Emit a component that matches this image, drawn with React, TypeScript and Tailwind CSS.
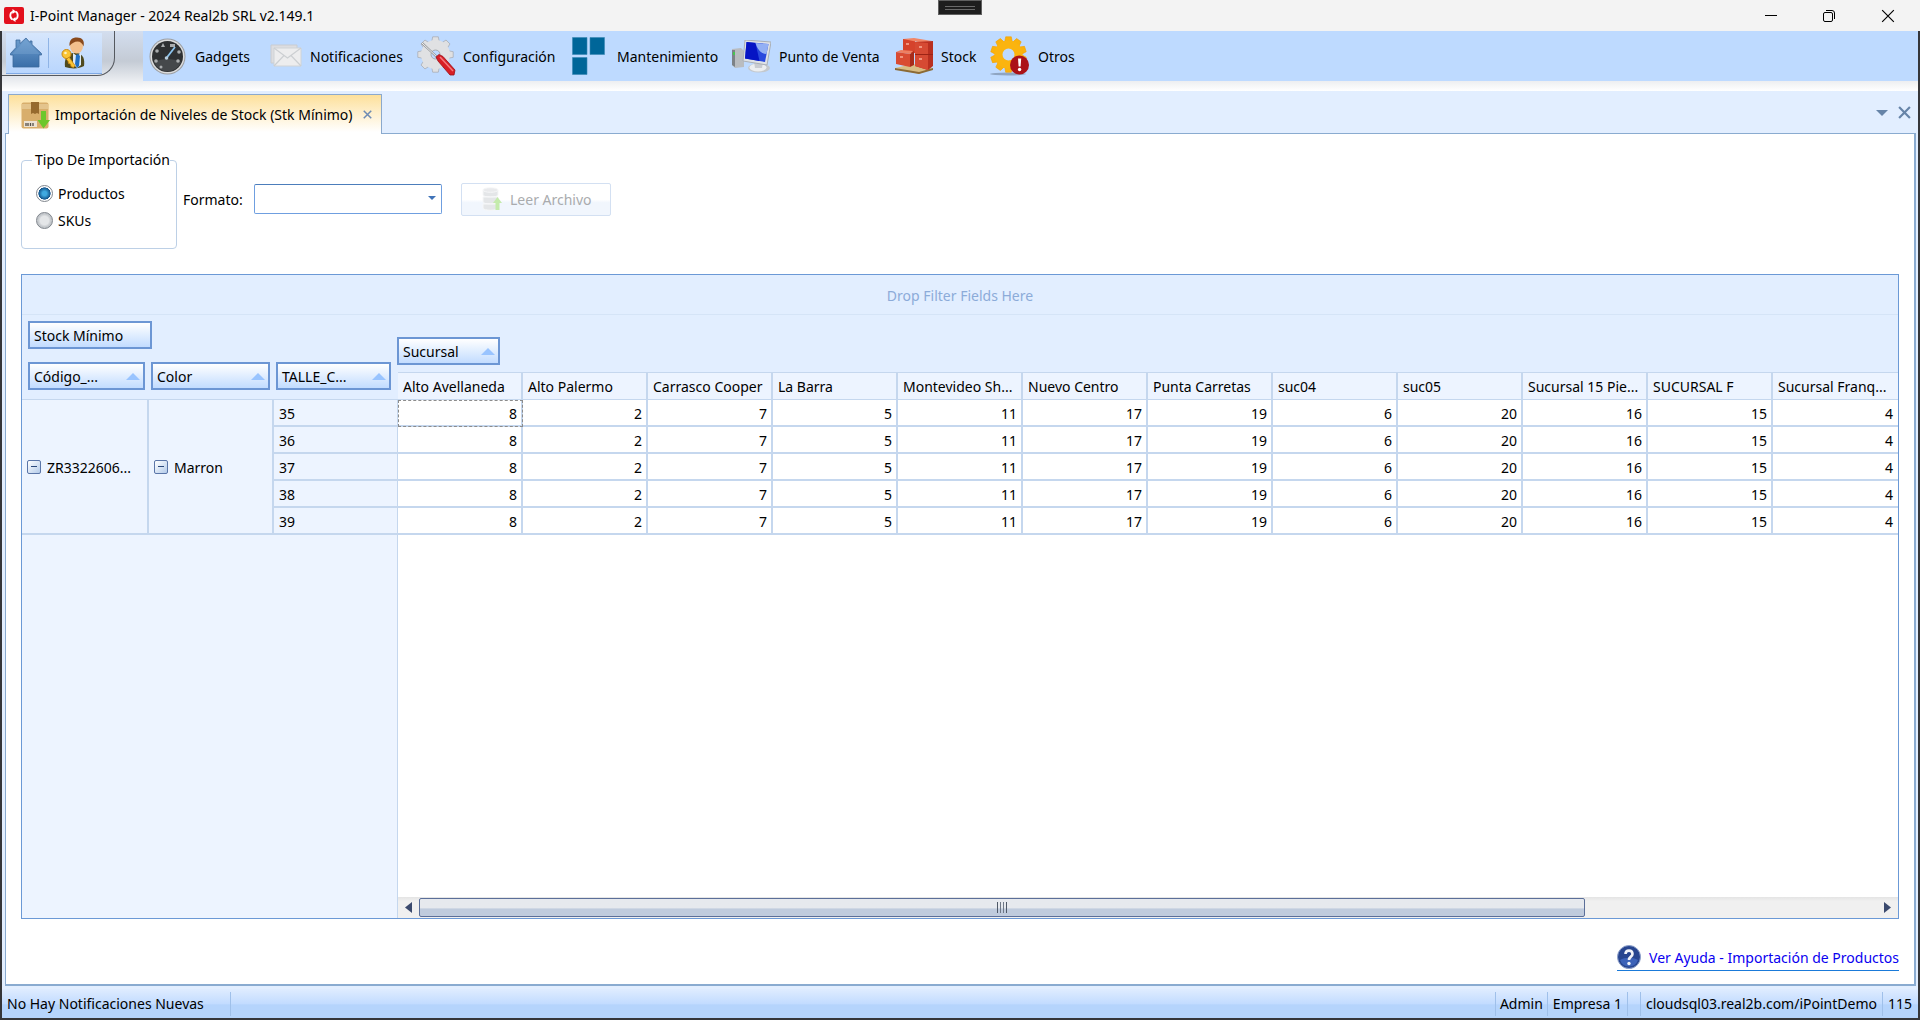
import { ReactNode } from "react"

// ####
// #### Data
// ####

const branches = [
  { name: "Alto Avellaneda", min: 8 },
  { name: "Alto Palermo", min: 2 },
  { name: "Carrasco Cooper", min: 7 },
  { name: "La Barra", min: 5 },
  { name: "Montevideo Sh...", min: 11 },
  { name: "Nuevo Centro", min: 17 },
  { name: "Punta Carretas", min: 19 },
  { name: "suc04", min: 6 },
  { name: "suc05", min: 20 },
  { name: "Sucursal 15 Pie...", min: 16 },
  { name: "SUCURSAL F", min: 15 },
  { name: "Sucursal Franq...", min: 4 },
]

const sizes = [35, 36, 37, 38, 39]

// ####
// #### Icons
// ####

const LogoIcon = () => (
  <svg width="20" height="17" viewBox="0 0 20 17" aria-hidden="true">
    <rect width="20" height="17" rx="2" fill="#e3101c" />
    <path
      d="M8.500 12.500C5.500 11 5.500 5.500 9 4.500M11.500 4.500c3 1.500 3 7-.5 8"
      fill="none"
      stroke="#fff"
      strokeWidth="1.800"
    />
    <path d="M8.500 2v5l3.500-2.500zM11.500 10v5L8 12.500z" fill="#fff" />
  </svg>
)

const HouseIcon = () => (
  <svg width="32" height="32" viewBox="0 0 32 32" aria-hidden="true">
    <defs>
      <linearGradient id="house" x1="0" y1="0" x2="0" y2="1">
        <stop offset="0" stopColor="#6f9fd0" />
        <stop offset="1" stopColor="#3a6ea8" />
      </linearGradient>
    </defs>
    <path
      d="M16 1 10 6.500V3H6v7.500L.5 16.500v1.500H3v12h26V18h2.500v-1.500L22 7.500V4h-2v1.500z"
      fill="url(#house)"
      stroke="#3d6a9c"
      strokeWidth=".8"
    />
    <path d="M16 2.500 2 17h28z" fill="#82acd8" opacity=".35" />
  </svg>
)

const UserKeyIcon = () => (
  <svg width="24" height="32" viewBox="0 0 24 32" aria-hidden="true">
    <path d="M4 30c-1-8 2-13 8-14h4c6 1 8 6 7 13-5 3-13 3-19 1z" fill="#4f4a1e" />
    <path d="m12 16 4 3 4-3v12l-4 3-4-4z" fill="#dceaf8" />
    <path d="m15 18 2-1 2 2-1 10-2 2-2-4z" fill="#1f6fc4" />
    <ellipse cx="15.500" cy="9" rx="6.500" ry="7.500" fill="#f3c08c" />
    <path
      d="M8.500 9C8 3 11 .5 16 .5s8 3 6.500 9c-1-3-3-5-6-5S11 6 8.500 9z"
      fill="#8a4a1c"
    />
    <circle cx="5.500" cy="17" r="4.500" fill="#fbc534" stroke="#c98612" />
    <circle cx="4.500" cy="16" r="1.300" fill="#fff3c4" />
    <path
      d="m8 20 6 8.500-1.500 2-2.500-1-.5-2.500-2-.5-.5-2.500-1.500-1.500z"
      fill="#fbc534"
      stroke="#c98612"
      strokeWidth=".8"
    />
  </svg>
)

const GaugeIcon = () => (
  <svg width="37" height="37" viewBox="0 0 37 37" aria-hidden="true">
    <circle cx="18.500" cy="18.500" r="18" fill="#9b9ea2" />
    <circle cx="18.500" cy="18.500" r="17" fill="#dcddde" />
    <circle cx="18.500" cy="18.500" r="15.500" fill="#2e3032" />
    <path d="M5 24a14.500 14.500 0 0 0 27 0c-8-4-19-4-27 0z" fill="#45484b" />
    <path d="m12 9 2-4 2 4zM21 6h5v3h-5z" fill="#a9acae" />
    <g fill="#a9acae">
      <circle cx="8" cy="13" r="1.800" />
      <circle cx="7" cy="23" r="1.800" />
      <circle cx="12" cy="29" r="1.500" />
      <circle cx="30" cy="14" r="1.800" />
      <circle cx="29" cy="23" r="1.800" />
    </g>
    <path d="m17.500 20 8.500-11" stroke="#8cc4ee" strokeWidth="1.800" />
    <circle cx="17.500" cy="20" r="1.800" fill="#b8cddd" />
  </svg>
)

const MailIcon = () => (
  <svg width="32" height="24" viewBox="0 0 32 24" aria-hidden="true">
    <path d="M1 1h26v18H1z" fill="#dcdde0" stroke="#c9ccd0" />
    <path d="M4 4h27v18H4z" fill="#ededee" stroke="#d0d3d6" />
    <path
      d="m4 4 13.500 10L31 4M4 22l10-10.500M31 22 21 11.500"
      fill="none"
      stroke="#cccfd2"
      strokeWidth="1.200"
    />
  </svg>
)

const GearTeeth = ({
  angles,
  fill,
  stroke,
}: {
  angles: number[]
  fill: string
  stroke: string
}) => (
  <g fill={fill} stroke={stroke} strokeWidth=".6">
    {angles.map(angle => (
      <path
        key={angle}
        d="M14.500 7 15.700.8h5.600L22.500 7z"
        transform={`rotate(${angle} 18.500 18.500)`}
      />
    ))}
  </g>
)

const GearToolIcon = () => (
  <svg width="40" height="40" viewBox="0 0 40 40" aria-hidden="true">
    <GearTeeth
      angles={[0, 45, 90, 135, 180, 225, 270, 315]}
      fill="#dfe0e2"
      stroke="#9da0a4"
    />
    <circle
      cx="18.500"
      cy="18.500"
      r="9.500"
      fill="none"
      stroke="#e0e1e3"
      strokeWidth="10"
    />
    <circle cx="18.500" cy="18.500" r="4.500" fill="#bedaff" stroke="#a8abae" />
    <path d="m5 7 16 15" stroke="#8d9195" strokeWidth="2.200" />
    <path d="m5 7 16 15" stroke="#f4f4f4" strokeWidth="1" />
    <path
      d="m19 21 3-2.500 4 2L38 34l-1 5h-4L21 25z"
      fill="#d81e26"
      stroke="#9c1016"
      strokeWidth=".8"
    />
    <path d="m23 21 13 14" stroke="#f47a7e" strokeWidth="1.500" />
  </svg>
)

const TilesIcon = () => (
  <svg width="33" height="38" viewBox="0 0 33 38" aria-hidden="true">
    <g fill="#006699" stroke="#3a86b4" strokeWidth=".6">
      <path d="M.5.5h14.500v17H.5zM18 .5h14.500v17H18zM.5 20.500h14.500v17H.5z" />
    </g>
  </svg>
)

const ComputerIcon = () => (
  <svg width="39" height="33" viewBox="0 0 39 33" aria-hidden="true">
    <path d="m0 9 9-1 3 3v16l-9 1-3-3z" fill="#b9bcc0" />
    <path d="M0 10h3v17l-3-2z" fill="#7d8287" />
    <path d="M1 12h2v3H1z" fill="#46c452" />
    <ellipse cx="27" cy="28" rx="11" ry="4.500" fill="#c4c8cd" />
    <ellipse cx="26" cy="27.500" rx="8.500" ry="4" fill="#eceef0" />
    <path d="M22 22h9l-1 6h-7z" fill="#c9ccd1" />
    <path d="m13 0 26 2-4 23-24-4z" fill="#dfe2e6" stroke="#a9afb6" />
    <path d="m14.500 2 22 2-3.500 18-20-3.500z" fill="#2a49dd" />
    <path d="m14.500 2 9 1 4 18-14.500-2.500z" fill="#0614c4" />
    <path d="m23.500 3 13 1-2 10c-5 0-9-4-11-11z" fill="#93b0f4" />
  </svg>
)

const BoxesIcon = () => (
  <svg width="38" height="36" viewBox="0 0 38 36" aria-hidden="true">
    <path d="m0 30 18-4 20 4-14 6z" fill="#d8bd84" />
    <path d="m0 30 24 4v2L0 32zM24 34l14-4v2l-14 4z" fill="#8b6a35" />
    <path d="M8 1h12v14H8z" fill="#d5432c" />
    <path d="m8 1 11-1 18 3-9 2z" fill="#f08567" />
    <path d="m20 4 18-1v25l-5 4-13-4z" fill="#b93020" />
    <path d="m20 4 13 1v27l-13-4z" fill="#d64a33" />
    <path d="M20 16.500h18" stroke="#9c2415" />
    <path d="m1 14 5-2 12 1-3 3z" fill="#ee7f61" />
    <path d="m1 14 14 2v13L1 26z" fill="#d94b32" />
    <path d="m15 16 4-3v14l-4 2z" fill="#a82c1a" />
    <path d="M11 5h3v2h-3zM24 8h3v2h-3zM24 20h3v2h-3zM5 18h3v2H5z" fill="#f0957f" />
  </svg>
)

const GearAlertIcon = () => (
  <svg width="40" height="40" viewBox="0 0 40 40" aria-hidden="true">
    <ellipse cx="18" cy="38" rx="18" ry="1.500" fill="#8fa5c2" />
    <GearTeeth
      angles={[0, 36, 72, 108, 144, 180, 216, 252, 288, 324]}
      fill="#fab20c"
      stroke="#f4a000"
    />
    <circle
      cx="18.500"
      cy="18.500"
      r="10"
      fill="none"
      stroke="#fbb40f"
      strokeWidth="8"
    />
    <circle cx="29.500" cy="29" r="9.500" fill="#ab1218" />
    <path d="M28 22.500h3.200l-.6 8h-2z" fill="#fff" />
    <circle cx="29.600" cy="33.500" r="1.700" fill="#fff" />
  </svg>
)

const PackageIcon = () => (
  <svg width="29" height="27" viewBox="0 0 29 27" aria-hidden="true">
    <rect x=".5" y=".5" width="27" height="26" rx="2" fill="#d8ae6c" />
    <path d="M1 2h26v5H1z" fill="#e4c48d" />
    <path d="M10 0h8v12l-2-1-2 1-2-1-2 1z" fill="#966a2e" />
    <path d="M3 19h13v6H3z" fill="#ece3d4" />
    <path d="M5 21v3M7 21v3M9.500 21v3M12 21v3" stroke="#55504a" strokeWidth="1.300" />
    <path d="M20 9h5v9h4l-6.500 8.500L16.500 18H20z" fill="#6cc72c" />
  </svg>
)

const DatabaseIcon = () => (
  <svg width="20" height="24" viewBox="0 0 20 24" aria-hidden="true">
    <g fill="#e4e6e8" stroke="#f6f7f8" strokeWidth="1">
      <path d="M1 3v5c0 2.500 15 2.500 15 0V3zM1 10v5c0 2.500 15 2.500 15 0v-5zM1 17v4c0 3 15 3 15 0v-4z" />
      <ellipse cx="8.500" cy="3" rx="7.500" ry="2.300" fill="#e9eaec" />
    </g>
    <path d="M15.500 10 20 16h-2.500v7h-4v-7H11z" fill="#c4ebac" />
  </svg>
)

const HelpIcon = () => (
  <svg width="24" height="24" viewBox="0 0 24 24" aria-hidden="true">
    <circle cx="12" cy="12" r="11.500" fill="#27458f" stroke="#8fa2cc" />
    <path d="M3 15a9.500 9.500 0 0 0 18 0c-5-3-13-3-18 0z" fill="#3c62b8" />
    <path
      d="M8.500 9c0-4.500 7-4.500 7 0 0 2.800-3.500 2.500-3.500 6"
      fill="none"
      stroke="#f1f3f8"
      strokeWidth="2.600"
    />
    <circle cx="12" cy="18.500" r="1.700" fill="#f1f3f8" />
  </svg>
)

const CrossIcon = ({ size, width }: { size: number; width: number }) => (
  <svg width={size} height={size} viewBox="0 0 12 12" aria-hidden="true">
    <path d="m1 1 10 10M11 1 1 11" stroke="currentColor" strokeWidth={width} />
  </svg>
)

// ####
// #### Parts
// ####

const menu = [
  { label: "Gadgets", icon: <GaugeIcon />, className: "pl-[6px] gap-[9px] w-[122px]" },
  { label: "Notificaciones", icon: <MailIcon />, className: "pl-[5px] gap-2 w-[152px]" },
  { label: "Configuración", icon: <GearToolIcon />, className: "gap-[6px] w-[155px]" },
  { label: "Mantenimiento", icon: <TilesIcon />, className: "gap-3 w-[160px]" },
  { label: "Punto de Venta", icon: <ComputerIcon />, className: "gap-2 w-[163px]" },
  { label: "Stock", icon: <BoxesIcon />, className: "gap-2 w-[95px]" },
  { label: "Otros", icon: <GearAlertIcon />, className: "gap-2 w-[90px]" },
]

const FieldButton = ({
  children,
  className,
  sortable = true,
}: {
  children: ReactNode
  className: string
  sortable?: boolean
}) => (
  <button
    type="button"
    className={`flex h-7 items-center justify-between border-2 border-[#6c96d4] bg-linear-to-b from-white to-[#c2dcff] pl-1 pr-[3px] ${className}`}
  >
    <span className="pt-px">{children}</span>
    {sortable && (
      <svg width="14" height="7" viewBox="0 0 14 7" aria-hidden="true">
        <path d="M0 7 7 0l7 7z" fill="#99c4ff" />
      </svg>
    )}
  </button>
)

const Collapse = ({ label }: { label: string }) => (
  <button
    type="button"
    aria-label={label}
    className="flex h-[14px] w-[14px] shrink-0 items-center justify-center rounded-[2px] border border-[#5a75a8] bg-linear-to-br from-white to-[#b4cbea]"
  >
    <span className="h-px w-[6px] bg-[#2c4a7c]" />
  </button>
)

const Radio = ({ label, checked }: { label: string; checked?: boolean }) => (
  <label className="flex h-[27px] items-center gap-[5px]">
    <input
      type="radio"
      name="importType"
      defaultChecked={checked}
      className="h-[17px] w-[17px] appearance-none rounded-full border border-[#7f858c] bg-radial from-[#e4e6e8] from-40% to-[#c4c8cc] to-60% checked:bg-radial checked:from-[#3fa9e0] checked:from-20% checked:via-[#14568c] checked:via-55% checked:to-white checked:to-60%"
    />
    {label}
  </label>
)

const StatusDivider = () => <span className="h-6 w-px bg-[#9fc0ea]" />

// ####
// #### Page
// ####

const App = () => {
  return (
    <div className="flex min-h-screen flex-col bg-[#35363a] font-['Noto_Sans','Open_Sans',sans-serif] text-sm text-black">
      {/* Window title */}
      <header className="relative flex h-[31px] items-center bg-[#f3f3f3] pl-1">
        <LogoIcon />
        <h1 className="pl-[6px]">I-Point Manager - 2024 Real2b SRL v2.149.1</h1>
        <div className="absolute left-[938px] top-0 flex h-[15px] w-11 flex-col items-center justify-center gap-[2px] border border-[#606060] bg-[#1e1e1e]">
          <span className="h-px w-[30px] bg-[#6a6a6a]" />
          <span className="h-px w-[30px] bg-[#6a6a6a]" />
        </div>
        <div className="ml-auto mr-[2px] flex h-full">
          <button type="button" aria-label="Minimizar" className="flex w-[58px] items-center justify-center">
            <span className="h-px w-3 bg-black" />
          </button>
          <button type="button" aria-label="Restaurar" className="flex w-[58px] items-center justify-center">
            <svg width="12" height="12" viewBox="0 0 12 12" fill="none" stroke="#000" aria-hidden="true">
              <rect x=".5" y="2.500" width="9" height="9" rx="1.500" />
              <path d="M3 .5h6a2.500 2.500 0 0 1 2.500 2.500v6" />
            </svg>
          </button>
          <button type="button" aria-label="Cerrar" className="flex w-[60px] items-center justify-center">
            <CrossIcon size={14} width={1} />
          </button>
        </div>
      </header>

      <div className="mx-[2px] mb-[2px] flex flex-1 flex-col bg-[#e2eeff]">
        {/* Toolbar */}
        <div className="flex h-[60px] bg-linear-to-b from-[#ccd5e2] to-white">
          <div className="w-[141px] bg-linear-to-b from-[#d3deef] via-[#c4cbd5] via-50% to-white">
            <div className="h-[45px] w-[113px] rounded-br-[18px] border-b border-r border-[#55595f] pl-1 pt-[2px]">
              <div className="flex h-[41px] w-24 items-center border-b border-[#7fa9e4] bg-linear-to-b from-[#d6e6fc] to-[#b9d6fd] pl-1">
                <button type="button" aria-label="Inicio">
                  <HouseIcon />
                </button>
                <span className="ml-[6px] mr-3 h-[30px] w-px bg-[#8fb4e6]" />
                <button type="button" aria-label="Usuario">
                  <UserKeyIcon />
                </button>
              </div>
            </div>
          </div>
          <div className="flex-1 bg-linear-to-b from-[#e9ebee] from-80% to-white">
            <nav className="flex h-[50px] bg-[#bedaff]">
              {menu.map(item => (
                <button
                  key={item.label}
                  type="button"
                  className={`flex items-center whitespace-nowrap ${item.className}`}
                >
                  {item.icon}
                  <span className="pt-[2px]">{item.label}</span>
                </button>
              ))}
            </nav>
          </div>
        </div>

        {/* Document tabs */}
        <div className="flex h-[42px] items-end pl-[6px]">
          <div className="z-10 -mb-px flex h-10 w-[374px] items-center border border-b-0 border-[#8ba9cd] bg-linear-to-b from-[#fde09a] to-white to-95% pl-3 pt-px">
            <PackageIcon />
            <span className="whitespace-nowrap pl-[5px]">
              Importación de Niveles de Stock (Stk Mínimo)
            </span>
            <button type="button" aria-label="Cerrar pestaña" className="mb-[2px] ml-auto mr-[9px] text-[#6d8bb4]">
              <CrossIcon size={9} width={2} />
            </button>
          </div>
          <div className="ml-auto mr-[7px] flex items-center gap-[10px] self-center pt-px text-[#6684a8]">
            <button type="button" aria-label="Lista de pestañas">
              <svg width="12" height="6" viewBox="0 0 12 6" aria-hidden="true">
                <path d="M0 0h12L6 6z" fill="currentColor" />
              </svg>
            </button>
            <button type="button" aria-label="Cerrar documento">
              <CrossIcon size={13} width={2} />
            </button>
          </div>
        </div>

        <main className="mx-[3px] mr-[2px] flex flex-1 flex-col border border-b-2 border-r-2 border-[#8aabd0] bg-white px-[15px] pt-[15px]">
          {/* Import options */}
          <form className="flex" onSubmit={e => e.preventDefault()}>
            <fieldset className="h-[100px] w-[156px] rounded-[4px] border border-[#bdd0e6] pl-[14px]">
              <legend className="-ml-1 whitespace-nowrap pl-[3px] leading-[22px]">
                Tipo De Importación
              </legend>
              <div className="pt-[9px]">
                <Radio label="Productos" checked />
                <Radio label="SKUs" />
              </div>
            </fieldset>
            <div className="ml-[6px] mt-[33px] flex h-[34px] items-center">
              <label htmlFor="format" className="w-[71px] pt-px">
                Formato:
              </label>
              <div className="relative">
                <select
                  id="format"
                  className="block h-[30px] w-[188px] appearance-none rounded-[2px] border border-[#6f9fe0] border-t-[#4c7dbb] bg-white px-2"
                />
                <svg
                  width="8"
                  height="4"
                  viewBox="0 0 8 4"
                  className="pointer-events-none absolute right-[6px] top-3"
                  aria-hidden="true"
                >
                  <path d="M0 0h8L4 4z" fill="#3f73b8" />
                </svg>
              </div>
              <button
                type="button"
                disabled
                className="ml-[19px] flex h-[33px] w-[150px] items-center gap-2 rounded-[2px] border border-[#d3e0f2] bg-linear-to-b from-white from-50% to-[#f1f6fd] to-60% pl-5 text-[#a9abae]"
              >
                <DatabaseIcon />
                <span className="pt-px">Leer Archivo</span>
              </button>
            </div>
          </form>

          {/* Pivot grid */}
          <section className="mt-[25px] flex flex-1 flex-col border border-[#6b99d6] bg-white">
            <div className="flex h-10 items-center justify-center border-b border-[#d5e4f7] bg-[#e2eeff] pt-[2px] text-[#8cabd9]">
              Drop Filter Fields Here
            </div>
            <table className="w-full table-fixed border-separate border-spacing-0">
              <colgroup>
                <col className="w-[127px]" />
                <col className="w-[125px]" />
                <col className="w-[124px]" />
                {branches.map(branch => (
                  <col key={branch.name} />
                ))}
              </colgroup>
              <thead>
                <tr className="h-[57px] bg-[#e2eeff]">
                  <td colSpan={3} rowSpan={2} className="border-b border-[#c5d7ee] pl-[6px] align-top">
                    <FieldButton className="mt-[6px] w-[124px]" sortable={false}>
                      Stock Mínimo
                    </FieldButton>
                    <div className="mt-[13px] flex gap-[6px]">
                      <FieldButton className="w-[117px]">Código_...</FieldButton>
                      <FieldButton className="w-[119px]">Color</FieldButton>
                      <FieldButton className="w-[115px]">TALLE_C...</FieldButton>
                    </div>
                  </td>
                  <td colSpan={12} className="pb-[7px] align-bottom">
                    <FieldButton className="-ml-px w-[103px]">Sucursal</FieldButton>
                  </td>
                </tr>
                <tr className="h-[28px] bg-[#edf4ff]">
                  {branches.map(branch => (
                    <th
                      key={branch.name}
                      scope="col"
                      className="overflow-hidden whitespace-nowrap border-y border-r-2 border-[#c5d7ee] pl-[5px] pt-px text-left font-normal last:border-r-0"
                    >
                      {branch.name}
                    </th>
                  ))}
                </tr>
              </thead>
              <tbody>
                {sizes.map((size, row) => (
                  <tr key={size} className="h-[27px]">
                    {row === 0 && (
                      <>
                        <th
                          rowSpan={5}
                          className="border-b-2 border-r-2 border-[#c5d7ee] bg-[#edf4ff] pl-[5px] font-normal"
                        >
                          <div className="flex items-center gap-[6px]">
                            <Collapse label="Contraer código" />
                            <span className="pt-[2px]">ZR3322606...</span>
                          </div>
                        </th>
                        <th
                          rowSpan={5}
                          className="border-b-2 border-r-2 border-[#c5d7ee] bg-[#edf4ff] pl-[5px] font-normal"
                        >
                          <div className="flex items-center gap-[6px]">
                            <Collapse label="Contraer color" />
                            <span className="pt-[2px]">Marron</span>
                          </div>
                        </th>
                      </>
                    )}
                    <th
                      scope="row"
                      className="border-b-2 border-r border-[#c5d7ee] bg-[#edf4ff] pl-[5px] pt-[2px] text-left font-normal"
                    >
                      {size}
                    </th>
                    {branches.map((branch, col) => (
                      <td
                        key={branch.name}
                        className={`border-b-2 border-r-2 border-[#c5d7ee] pr-1 pt-[2px] text-right last:border-r-0 last:pr-[5px] ${
                          row === 0 && col === 0
                            ? "outline-1 -outline-offset-1 outline-dashed outline-[#8c8c8c]"
                            : ""
                        }`}
                      >
                        {branch.min}
                      </td>
                    ))}
                  </tr>
                ))}
              </tbody>
            </table>
            <div className="flex flex-1">
              <div className="w-[376px] border-r border-[#c5d7ee] bg-[#edf4ff]" />
              <div className="flex min-h-[120px] flex-1 flex-col justify-end">
                <div className="flex h-[21px] items-center bg-linear-to-b from-[#e4e4e4] to-[#f0f0f0] to-20% px-[7px]">
                  <button type="button" aria-label="Desplazar a la izquierda">
                    <svg width="7" height="11" viewBox="0 0 7 11" aria-hidden="true">
                      <path d="M7 0v11L0 5.500z" fill="#3b4a6e" />
                    </svg>
                  </button>
                  <div className="mx-[7px] flex-1">
                    <div className="flex h-[19px] w-4/5 items-center justify-center gap-[2px] rounded-[2px] border border-[#5b6f99] bg-linear-to-b from-[#e6e9ee] from-50% to-[#bfcbdd] to-60%">
                      <span className="h-[11px] w-px bg-[#4f5968]" />
                      <span className="h-[11px] w-px bg-[#6f7886]" />
                      <span className="h-[11px] w-px bg-[#6f7886]" />
                      <span className="h-[11px] w-px bg-[#4f5968]" />
                    </div>
                  </div>
                  <button type="button" aria-label="Desplazar a la derecha">
                    <svg width="7" height="11" viewBox="0 0 7 11" aria-hidden="true">
                      <path d="M0 0v11l7-5.500z" fill="#3b4a6e" />
                    </svg>
                  </button>
                </div>
              </div>
            </div>
          </section>

          <div className="flex h-[65px] items-end justify-end pb-[13px]">
            <a
              href="#ayuda"
              className="flex h-[26px] items-start gap-2 border-b border-[#1a7ad9] text-[#0a00f0]"
            >
              <HelpIcon />
              <span className="leading-[26px]">Ver Ayuda - Importación de Productos</span>
            </a>
          </div>
        </main>

        {/* Status bar */}
        <footer className="mt-[3px] flex h-[29px] items-center bg-linear-to-b from-[#dfecff] via-[#c3dcff] via-50% to-[#b5d4fc] to-55% pl-[5px] pr-[6px]">
          <span className="w-[223px]">No Hay Notificaciones Nuevas</span>
          <StatusDivider />
          <span className="flex-1" />
          <StatusDivider />
          <span className="px-1">Admin</span>
          <StatusDivider />
          <span className="px-[5px]">Empresa 1</span>
          <StatusDivider />
          <span className="w-3" />
          <StatusDivider />
          <span className="px-[5px]">cloudsql03.real2b.com/iPointDemo</span>
          <StatusDivider />
          <span className="pl-[5px]">115</span>
        </footer>
      </div>
    </div>
  )
}

export default App
